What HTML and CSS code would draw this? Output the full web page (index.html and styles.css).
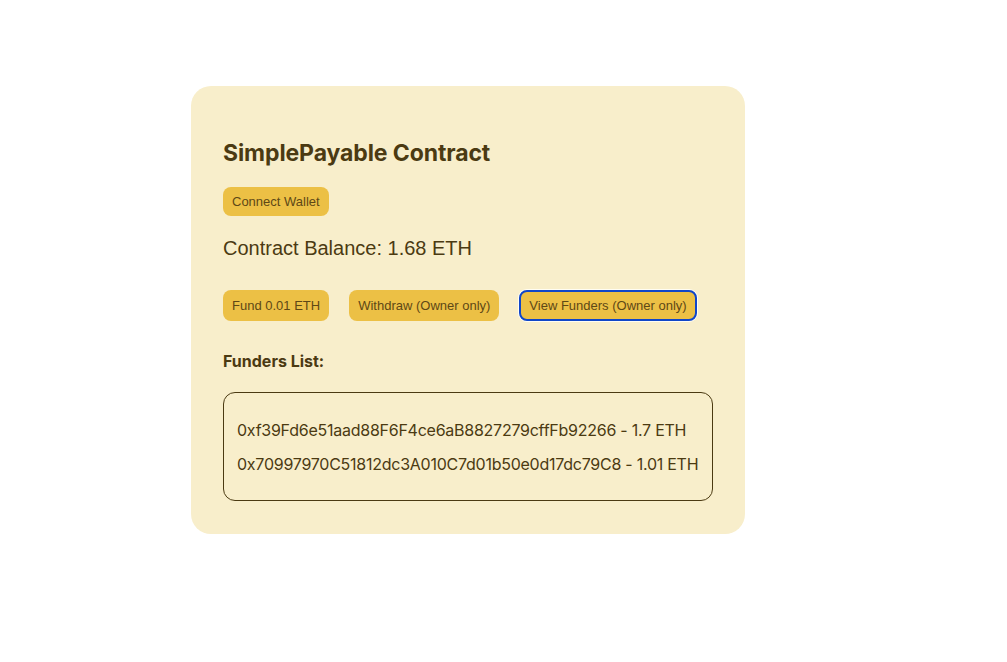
FILE: index.html
```html
<!DOCTYPE html>
<html>
<head>
<meta charset="utf-8">
<link rel="stylesheet" href="styles.css">
</head>
<body>
<div class="page">
  <div class="card">
    <h2 class="title">SimplePayable Contract</h2>
    <button class="btn btn-connect">Connect Wallet</button>
    <p class="balance">Contract Balance: 1.68 ETH</p>
    <div class="actions">
      <button class="btn">Fund 0.01 ETH</button>
      <button class="btn">Withdraw (Owner only)</button>
      <button class="btn focused">View Funders (Owner only)</button>
    </div>
    <h3 class="subtitle">Funders List:</h3>
    <ul class="funders">
      <li>0xf39Fd6e51aad88F6F4ce6aB8827279cffFb92266 - 1.7 ETH</li>
      <li>0x70997970C51812dc3A010C7d01b50e0d17dc79C8 - 1.01 ETH</li>
    </ul>
  </div>
</div>
</body>
</html>
```
FILE: styles.css
```css
html, body {
  margin: 0;
  padding: 0;
  background: #ffffff;
}
.page {
  padding: 86px 0 0 191px;
}
.card {
  width: 554px;
  box-sizing: border-box;
  background: #f8eecb;
  border-radius: 20px;
  padding: 53px 32px 33px;
  color: #4b3a12;
  font-family: Inter, "Liberation Sans", sans-serif;
}
.title {
  margin: 0;
  font-size: 23px;
  line-height: 28px;
  font-weight: 700;
  letter-spacing: -0.1px;
}
.btn {
  display: inline-block;
  background: #ecc045;
  color: #5e4816;
  border: 0;
  border-radius: 8px;
  font-family: "Liberation Sans", Arial, sans-serif;
  font-size: 13px;
  line-height: 15px;
  padding: 8px 9px;
  margin: 0;
}
.btn-connect {
  margin-top: 20px;
  padding: 7px 9px;
  display: block;
}
.balance {
  margin: 20px 0 0;
  font-family: "Liberation Sans", Arial, sans-serif;
  font-size: 20px;
  line-height: 24px;
}
.actions {
  margin-top: 30px;
  display: flex;
  gap: 20px;
}
.focused {
  border: 2px solid #1046c9;
  padding: 6px 8px;
  box-shadow: 0 0 0 1px #fffdf3;
}
.subtitle {
  margin: 30px 0 0;
  font-size: 16px;
  line-height: 20px;
  font-weight: 700;
}
.funders {
  list-style: none;
  margin: 21px 0 0;
  padding: 27px 13px 26px;
  border: 1px solid #4b3a12;
  border-radius: 12px;
  display: flex;
  flex-direction: column;
  gap: 14px;
  font-size: 16px;
  line-height: 20px;
  letter-spacing: -0.25px;
  white-space: nowrap;
}
.funders li {
  margin: 0;
}
```
